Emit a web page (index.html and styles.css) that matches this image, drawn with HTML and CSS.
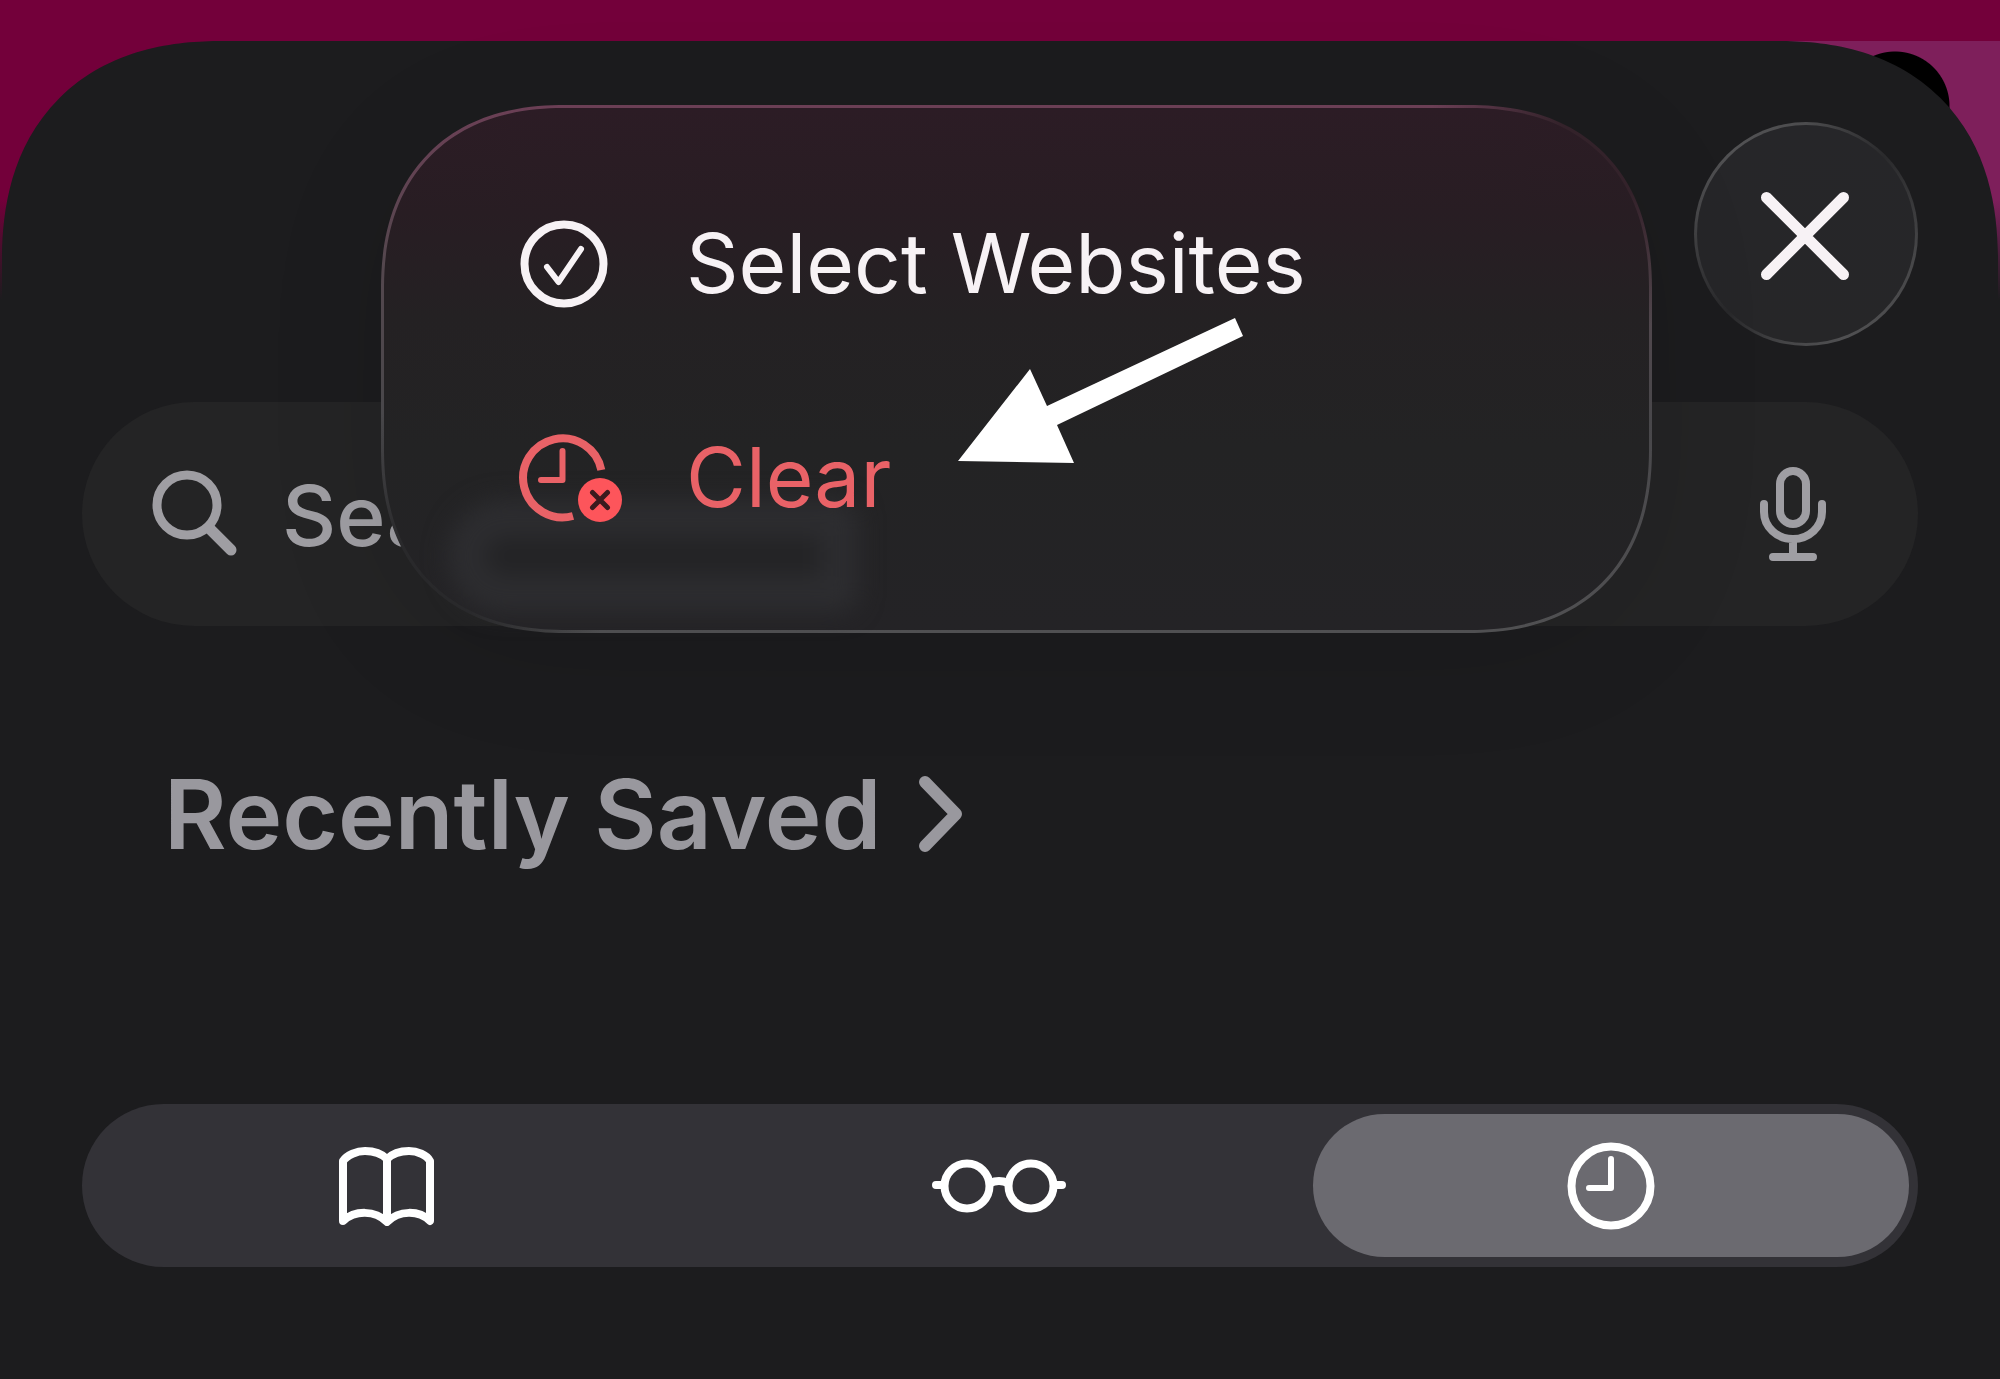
FILE: index.html
```html
<!DOCTYPE html>
<html lang="en">
<head>
<meta charset="utf-8">
<meta name="viewport" content="width=device-width, initial-scale=1">
<title>History</title>
<link rel="stylesheet" href="styles.css">
</head>
<body>
<main class="sheet">
  <header class="toolbar">
    <button class="close" type="button" aria-label="Close">
      <svg class="close-icon" viewBox="0 0 88 88" aria-hidden="true"><path d="M4.500 7.500 81.500 84.500M81.500 7.500 4.500 84.500"/></svg>
    </button>
  </header>

  <form class="search" role="search">
    <svg class="search-icon" viewBox="0 0 86 88" aria-hidden="true">
      <circle cx="35" cy="35" r="30"/><path d="M58 59 79 80" class="handle"/>
    </svg>
    <input class="search-input" type="text" placeholder="Search" aria-label="Search">
    <button class="mic" type="button" aria-label="Dictate">
      <svg class="mic-icon" viewBox="0 0 66 94" aria-hidden="true">
        <rect x="20" y="4" width="26" height="53" rx="13"/>
        <path d="M4 37v8a29 27 0 0 0 58 0v-8M33 73v16M13 90h40"/>
      </svg>
    </button>
  </form>

  <h2 class="section-title">
    <a class="section-link" href="#saved">Recently Saved
      <svg class="chevron" viewBox="0 0 44 76" aria-hidden="true"><path d="M6 6 37 38 6 70"/></svg>
    </a>
  </h2>

  <div class="segments" role="radiogroup" aria-label="Library">
    <label class="segment">
      <input class="segment-input" type="radio" name="library" aria-label="Bookmarks">
      <svg class="icon-book" viewBox="0 0 96 80" aria-hidden="true">
        <path d="M48 13C42 7 34 5 26 5C18 5 8 9 4 15V75C16 64 36 64 48 76C60 64 80 64 91 75V15C88 9 78 5 70 5C62 5 54 7 48 13ZM48 13V75"/>
      </svg>
    </label>
    <label class="segment">
      <input class="segment-input" type="radio" name="library" aria-label="Reading List">
      <svg class="icon-glasses" viewBox="0 0 134 54" aria-hidden="true">
        <circle cx="35" cy="27" r="22.500"/><circle cx="99" cy="27" r="22.500"/>
        <path d="M4 26h8M122 26h8M58 24q9-4 18 0"/>
      </svg>
    </label>
    <label class="segment">
      <input class="segment-input" type="radio" name="library" aria-label="History" checked>
      <svg class="icon-clock" viewBox="0 0 88 88" aria-hidden="true">
        <circle cx="44" cy="44" r="39.500"/><path class="hands" d="M44 17V46H22"/>
      </svg>
    </label>
  </div>

  <div class="menu" role="menu">
    <button class="menu-item" type="button" role="menuitem">
      <svg class="menu-icon" viewBox="0 0 110 88" aria-hidden="true">
        <circle cx="46" cy="44" r="39.500"/><path class="hands" d="M29 47 40.500 62 63 29"/>
      </svg>
      Select Websites
    </button>
    <button class="menu-item destructive" type="button" role="menuitem">
      <svg class="menu-icon" viewBox="0 0 110 88" aria-hidden="true">
        <path class="ring" d="M83.300 36A39.500 39.500 0 1 0 55 82"/>
        <path class="hands" d="M44.500 17V46H23"/>
        <circle class="badge" cx="82" cy="66" r="22"/><path class="badge-x" d="M74.500 58.500 89.500 73.500M89.500 58.500 74.500 73.500"/>
      </svg>
      Clear
    </button>
    <svg class="arrow" viewBox="0 0 286 146" aria-hidden="true">
      <path d="M0 144 72 52 89 89 277 1 285 19 99 108 116 146Z"/>
    </svg>
  </div>
</main>
</body>
</html>
```
FILE: styles.css
```css
*,
*::before {
  box-sizing: border-box;
}

body {
  margin: 0;
  padding: 41px 2px 0;
  min-height: 100vh;
  display: flex;
  flex-direction: column;
  background:
    linear-gradient(transparent 200px, #1c1c1e 300px),
    radial-gradient(circle at calc(100% - 105px) 106px, #000 54px, transparent 55px),
    linear-gradient(#7e1f5b, #7e1f5b) right 41px / 300px 100% no-repeat,
    #73003a;
  font-family: Inter, "Liberation Sans", sans-serif;
  color: #f7f2f5;
}

button {
  border: 0;
  padding: 0;
  background: none;
  color: inherit;
  font: inherit;
}

svg {
  display: block;
  flex: none;
  fill: none;
  stroke: currentColor;
  stroke-width: 8px;
  stroke-linecap: round;
  stroke-linejoin: round;
}

.sheet {
  position: relative;
  flex: 1;
  display: flex;
  flex-direction: column;
  padding: 81px 80px 112px;
  border-radius: 188px 188px 0 0;
  background: #1c1c1e;
}

.toolbar {
  display: flex;
  justify-content: flex-end;
}

.close {
  display: grid;
  place-items: center;
  width: 224px;
  height: 224px;
  border: 3px solid transparent;
  border-radius: 50%;
  background:
    linear-gradient(#262629, #262628) padding-box,
    conic-gradient(from 0deg, #4c4c4e, #2a2a2c 45deg, #464648 100deg, #505052 160deg, #464648 190deg, #28282a 225deg, #464648 280deg, #525254 320deg, #4c4c4e) border-box;
}

.close-icon {
  width: 88px;
  height: 88px;
  overflow: visible;
  stroke-width: 11px;
}

.search {
  display: flex;
  align-items: center;
  gap: 44px;
  height: 224px;
  margin-top: 56px;
  padding: 0 92px 0 70px;
  border-radius: 112px;
  background: #242425;
  color: #9f9ea3;
}

.search-icon {
  width: 86px;
  height: 88px;
  stroke-width: 9px;
}

.handle {
  stroke-width: 11px;
}

.search-input {
  flex: 1;
  min-width: 0;
  border: 0;
  padding: 4px 0 0;
  outline: 0;
  background: none;
  color: inherit;
  font: 500 84px/104px Inter, "Liberation Sans", sans-serif;
}

.search-input::placeholder {
  color: #9f9ea3;
  opacity: 1;
}

.mic-icon {
  width: 66px;
  height: 94px;
}

.section-title {
  margin: 124px 82px 0;
  font-size: 96px;
  line-height: 128px;
  font-weight: 600;
}

.section-link {
  display: inline-flex;
  align-items: center;
  gap: 38px;
  color: #99989e;
  text-decoration: none;
}

.chevron {
  width: 44px;
  height: 76px;
  stroke-width: 12px;
}

.segments {
  display: grid;
  grid-template-columns: repeat(3, 1fr);
  height: 163px;
  margin-top: 226px;
  border-radius: 82px;
  background: #333237;
  color: #fff;
}

.segment {
  position: relative;
  display: grid;
  place-items: center;
  margin: 10px 9px 10px 7px;
  border-radius: 72px;
}

.segment:has(:checked) {
  background: #6b6a70;
}

.segment-input {
  position: absolute;
  inset: 0;
  margin: 0;
  appearance: none;
}

.icon-book {
  width: 96px;
  height: 80px;
}

.icon-glasses {
  width: 134px;
  height: 54px;
}

.icon-clock {
  width: 88px;
  height: 88px;
}

.hands {
  stroke-width: 6px;
}

.menu {
  position: absolute;
  isolation: isolate;
  top: 64px;
  right: 346px;
  width: 1271px;
  padding: 49px 0 45px 134px;
  border: 3px solid transparent;
  border-radius: 160px;
  background:
    linear-gradient(#2c1c25, #281d23 20%, #242123 40%, #232324 65%, #242326) padding-box,
    radial-gradient(circle at 0 100%, #29292b 90px, transparent 220px) border-box,
    radial-gradient(circle at 100% 0, #33222a 90px, transparent 220px) border-box,
    linear-gradient(#6b3f55, #54474e 30%, #48474a 60%, #505052) border-box;
  box-shadow: 0 20px 120px rgba(0, 0, 0, 0.1);
}

/* Search text showing softly through the glass */
.menu::before {
  content: "";
  position: absolute;
  z-index: -1;
  left: 64px;
  top: 392px;
  width: 410px;
  height: 112px;
  border: 36px solid #2d2d30;
  border-radius: 60px 20px 20px 60px;
  background: #232325;
  filter: blur(12px);
}

.menu-item {
  display: flex;
  align-items: center;
  gap: 58px;
  width: 100%;
  height: 214px;
  font-size: 82px;
  line-height: 104px;
  text-align: left;
}

.destructive {
  color: #e96267;
}

.menu-icon {
  width: 110px;
  height: 88px;
}

.ring {
  stroke-linecap: butt;
}

.badge {
  fill: #fd555b;
  stroke: none;
}

.badge-x {
  stroke: #3a1a1e;
  stroke-width: 5px;
}

/* Pointer laid over the menu, aimed at the Clear item */
.arrow {
  position: absolute;
  top: 209px;
  left: 574px;
  width: 286px;
  height: 146px;
  fill: #fff;
  stroke: none;
  pointer-events: none;
}

/* Continuous-curvature corners */
@supports (corner-shape: superellipse(1.2)) {
  .sheet {
    border-radius: 220px 220px 0 0;
    corner-shape: superellipse(1.2);
  }

  .menu {
    border-radius: 184px;
    corner-shape: superellipse(1.2);
  }
}
```
